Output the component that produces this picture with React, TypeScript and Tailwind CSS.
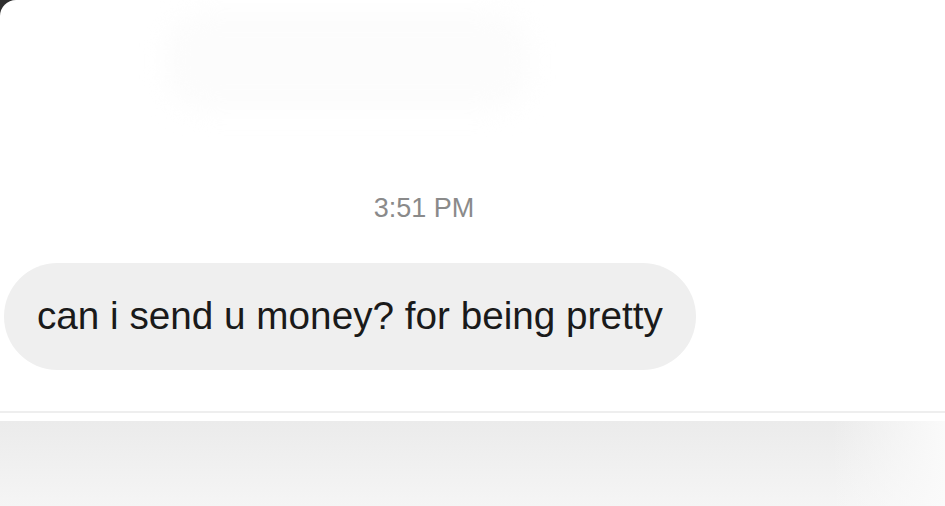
import React from "react";

export default function App() {
  return (
    <div className="w-[945px] h-[506px] bg-[#2e2e2e] overflow-hidden">
      <div
        className="flex flex-col h-full bg-white rounded-tl-[16px]"
        style={{ fontFamily: '"Liberation Sans", Arial, sans-serif' }}
      >
        {/* faded header area */}
        <div className="h-[192px] pt-[12px]">
          <div className="ml-[165px] w-[365px] h-[98px] bg-[#fcfcfc] rounded-[40px] blur-md" />
        </div>

        <div className="w-[848px] text-center text-[27px] leading-[32px] text-[#8a8a8a]">
          3:51 PM
        </div>

        <div className="mt-[39px] ml-[4px]">
          <div className="inline-flex items-center h-[107px] pl-[33px] pr-[33px] rounded-full bg-[#efefef] text-[38.7px] text-[#1a1a1a]">
            can i send u money? for being pretty
          </div>
        </div>

        {/* composer bar */}
        <div className="mt-[41px] h-[2px] bg-[#eeeeee]" />
        <div className="h-[8px] bg-white" />
        <div className="flex-1 bg-gradient-to-b from-[#ebebeb] to-[#f5f5f5]">
          <div className="h-full bg-gradient-to-r from-transparent via-transparent via-88% to-[#fafafa]" />
        </div>
      </div>
    </div>
  );
}
